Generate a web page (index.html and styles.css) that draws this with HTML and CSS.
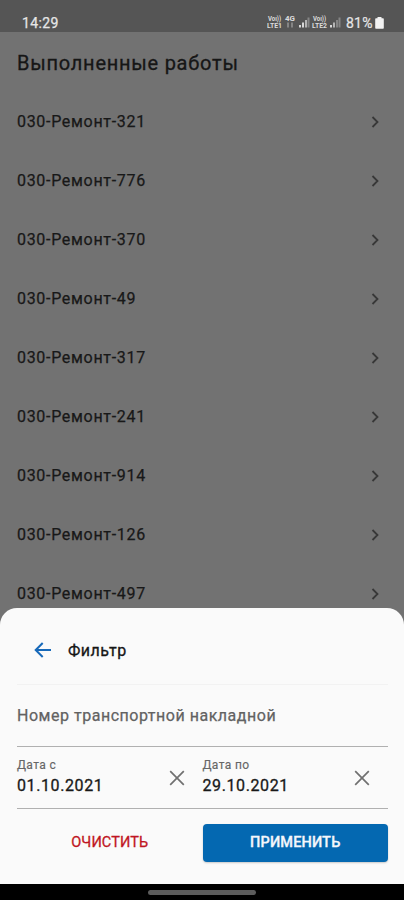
FILE: index.html
```html
<!DOCTYPE html>
<html lang="ru">
<head>
<meta charset="utf-8">
<title>Выполненные работы</title>
<link rel="stylesheet" href="styles.css">
</head>
<body>
<div class="phone">
  <header class="status">
    <span class="clock">14:29</span>
    <div class="indicators">
      <svg class="signals" width="76" height="14" viewBox="0 0 76 14">
        <g class="tiny">
          <text x="1" y="6.2" textLength="13" lengthAdjust="spacingAndGlyphs">Voı))</text>
          <text x="0" y="12.6" textLength="15" lengthAdjust="spacingAndGlyphs">LTE1</text>
          <text x="18" y="6.2" textLength="10" lengthAdjust="spacingAndGlyphs">4G</text>
          <text x="46" y="6.2" textLength="13" lengthAdjust="spacingAndGlyphs">Voı))</text>
          <text x="45" y="12.6" textLength="15" lengthAdjust="spacingAndGlyphs">LTE2</text>
        </g>
        <path class="dim" d="M20 7.500h2v5h-2zM24 7.500h2v5h-2z"/>
        <path class="lit" d="M32 10h2v2.500h-2zM35 7.500h2v5h-2zM63 10h2v2.500h-2z"/>
        <path class="mid" d="M38 5h2v7.500h-2zM66 7.500h2v5h-2z"/>
        <path class="dim" d="M40.500 2.500h2v10h-2zM69 5h2v7.500h-2zM71.500 2.500h2v10h-2z"/>
      </svg>
      <span class="percent">81%</span>
      <svg class="battery" width="9" height="12" viewBox="0 0 9 12"><path d="M2.500 0h4v1.200H8q.8 0 .8.800v9q0 .8-.8.800H1q-.8 0-.8-.8V2q0-.8.8-.8h1.500z"/></svg>
    </div>
  </header>
  <main class="page">
    <h1 class="title">Выполненные работы</h1>
    <ul class="jobs">
      <li class="job"><span>030-Ремонт-321</span><svg class="chevron" viewBox="0 0 8 12"><path d="M1.500 1l5 5-5 5"/></svg></li>
      <li class="job"><span>030-Ремонт-776</span><svg class="chevron" viewBox="0 0 8 12"><path d="M1.500 1l5 5-5 5"/></svg></li>
      <li class="job"><span>030-Ремонт-370</span><svg class="chevron" viewBox="0 0 8 12"><path d="M1.500 1l5 5-5 5"/></svg></li>
      <li class="job"><span>030-Ремонт-49</span><svg class="chevron" viewBox="0 0 8 12"><path d="M1.500 1l5 5-5 5"/></svg></li>
      <li class="job"><span>030-Ремонт-317</span><svg class="chevron" viewBox="0 0 8 12"><path d="M1.500 1l5 5-5 5"/></svg></li>
      <li class="job"><span>030-Ремонт-241</span><svg class="chevron" viewBox="0 0 8 12"><path d="M1.500 1l5 5-5 5"/></svg></li>
      <li class="job"><span>030-Ремонт-914</span><svg class="chevron" viewBox="0 0 8 12"><path d="M1.500 1l5 5-5 5"/></svg></li>
      <li class="job"><span>030-Ремонт-126</span><svg class="chevron" viewBox="0 0 8 12"><path d="M1.500 1l5 5-5 5"/></svg></li>
      <li class="job"><span>030-Ремонт-497</span><svg class="chevron" viewBox="0 0 8 12"><path d="M1.500 1l5 5-5 5"/></svg></li>
    </ul>
  </main>
  <section class="sheet">
    <div class="sheet-head">
      <svg class="back" width="18" height="16" viewBox="0 0 18 16"><path d="M17 8H2M8.700 1L1.700 8l7 7"/></svg>
      <h2 class="sheet-title">Фильтр</h2>
    </div>
    <div class="field number"><span class="placeholder">Номер транспортной накладной</span></div>
    <div class="dates">
      <div class="field date">
        <div><div class="label">Дата с</div><div class="value">01.10.2021</div></div>
        <svg class="clear" width="16" height="16" viewBox="0 0 16 16"><path d="M1.200 1.200l13.600 13.600M14.800 1.200L1.200 14.800"/></svg>
      </div>
      <div class="field date">
        <div><div class="label">Дата по</div><div class="value">29.10.2021</div></div>
        <svg class="clear" width="16" height="16" viewBox="0 0 16 16"><path d="M1.200 1.200l13.600 13.600M14.800 1.200L1.200 14.800"/></svg>
      </div>
    </div>
    <div class="actions">
      <button class="btn reset">ОЧИСТИТЬ</button>
      <button class="btn apply">ПРИМЕНИТЬ</button>
    </div>
  </section>
  <footer class="navbar"><div class="handle"></div></footer>
</div>
</body>
</html>
```
FILE: styles.css
```css
* { box-sizing: border-box; }
body { margin: 0; font-family: Roboto, "Liberation Sans", sans-serif; }
h1, h2, ul { margin: 0; padding: 0; }

.phone {
  position: relative;
  display: flex;
  flex-direction: column;
  width: 404px;
  height: 900px;
  overflow: hidden;
  background: #727272;
}

.status {
  display: flex;
  flex: none;
  justify-content: space-between;
  height: 32px;
  padding: 14px 20px 0 22px;
  background: #555;
  color: #e6e6e6;
  line-height: 18px;
}
.clock { font-size: 14px; letter-spacing: .35px; -webkit-text-stroke: .25px; }
.indicators { display: flex; align-items: flex-start; }
.signals { margin: 1px 3px 0 0; }
.tiny { font-size: 6.800px; font-weight: 700; fill: #dcdcdc; }
.lit { fill: #d8d8d8; }
.mid { fill: #b5b5b5; }
.dim { fill: #858585; }
.percent { width: 28px; font-size: 14px; letter-spacing: .2px; white-space: nowrap; -webkit-text-stroke: .2px; }
.battery { margin: 3px 0 0 1px; fill: #f2f2f2; }

.page { flex: 1; min-height: 0; }
.title {
  height: 60px;
  padding: 1px 17px 0;
  font-size: 20px;
  font-weight: 400;
  line-height: 60px;
  letter-spacing: .75px;
  color: #161616;
  -webkit-text-stroke: .3px;
}
.jobs { list-style: none; }
.job {
  display: flex;
  align-items: center;
  justify-content: space-between;
  height: 59.060px;
  padding: 0 25px 0 17px;
  font-size: 16px;
  letter-spacing: .69px;
  color: #181818;
  -webkit-text-stroke: .25px;
}
.chevron { width: 8px; height: 12px; fill: none; stroke: #383838; stroke-width: 1.800; }

.sheet {
  position: absolute;
  left: 0;
  right: 0;
  bottom: 16px;
  height: 276px;
  padding: 0 16px 0 17px;
  border-radius: 17px 17px 0 0;
  background: #fafafa;
}
.sheet-head {
  display: flex;
  align-items: center;
  gap: 16px;
  height: 77px;
  padding: 8px 0 0 17px;
  border-bottom: 1px solid #f2f2f2;
}
.back { fill: none; stroke: #1769b9; stroke-width: 2; }
.sheet-title { font-size: 16px; font-weight: 400; letter-spacing: .5px; color: #161616; -webkit-text-stroke: .3px; }
.field { border-bottom: 1px solid #b0b0b0; }
.number { height: 62px; line-height: 61px; }
.placeholder { font-size: 16px; letter-spacing: .52px; color: #626262; -webkit-text-stroke: .25px; }
.dates { display: flex; }
.date {
  display: flex;
  flex: 1;
  align-items: flex-start;
  justify-content: space-between;
  height: 62px;
  padding-top: 10px;
}
.label { font-size: 12px; line-height: 17px; letter-spacing: .35px; color: #666; -webkit-text-stroke: .15px; }
.value { font-size: 16px; line-height: 24px; letter-spacing: .6px; color: #181818; -webkit-text-stroke: .3px; }
.clear { margin: 13px 18px 0 0; fill: none; stroke: #707070; stroke-width: 1.700; }

.actions { display: flex; margin-top: 15px; }
.btn {
  flex: 1;
  height: 38px;
  padding: 0;
  border: 0;
  border-radius: 4px;
  background: none;
  font: 400 14.500px/38px Roboto, "Liberation Sans", sans-serif;
  letter-spacing: .1px;
  -webkit-text-stroke: .3px;
}
.reset { color: #c01522; }
.apply { background: #0468b1; color: #f4f7fb; box-shadow: 0 1px 2px #0003; font-weight: 500; letter-spacing: .15px; }

.navbar {
  display: flex;
  flex: none;
  justify-content: center;
  height: 16px;
  padding-top: 6px;
  background: #000;
}
.handle { width: 108px; height: 5px; border-radius: 3px; background: #5c5c5c; }
```
